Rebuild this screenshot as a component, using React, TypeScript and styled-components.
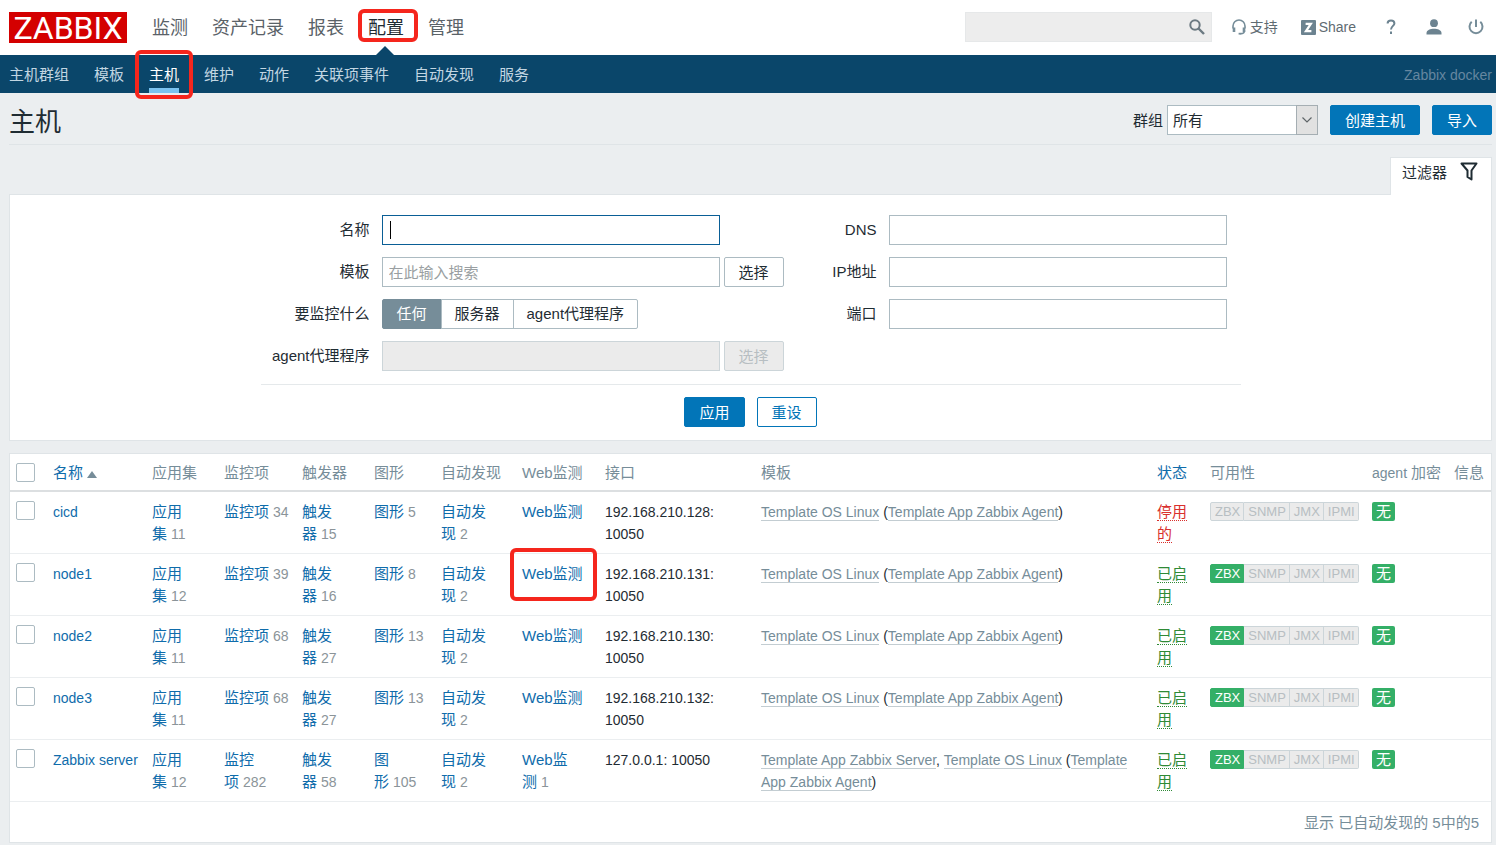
import React from 'react';
import styled, { createGlobalStyle, css } from 'styled-components';

const Global = createGlobalStyle`
  *, *::before, *::after { box-sizing: border-box; }
  body {
    margin: 0;
    background: #ebeef0;
    color: #1f2c33;
    font: 15px/22px "Liberation Sans", "Noto Sans CJK SC", sans-serif;
  }
  button, input, select { font: inherit; color: inherit; margin: 0; }
  a { color: #0f6cab; text-decoration: none; }
  ul { list-style: none; margin: 0; padding: 0; }
`;

/* Red frame drawn over the page to point at an item */
const Callout = styled.span<{ $inset: string }>`
  position: absolute;
  inset: ${p => p.$inset};
  border: 4px solid #f5261d;
  border-radius: 6px;
  pointer-events: none;
  z-index: 2;
`;

const TopBar = styled.header`
  display: flex;
  align-items: center;
  height: 55px;
  padding: 0 9px;
  background: #fff;
`;

const Logo = styled.a`
  display: block;
  width: 118px;
  height: 31px;
  background: #d40000;
  color: #fff;
  font-family: Roboto, "Liberation Sans", sans-serif;
  font-size: 32px;
  line-height: 32px;
  text-align: center;
`;

const MainMenu = styled.ul`
  display: flex;
  gap: 24px;
  margin-left: 25px;
  font-size: 18px;
  line-height: 54px;
`;

const MainItem = styled.li<{ $active?: boolean }>`
  position: relative;
  white-space: nowrap;
  a { color: ${p => (p.$active ? '#1f2c33' : '#5a6268')}; }
  ${p => p.$active && css`
    &::after {
      content: '';
      position: absolute;
      left: 50%;
      bottom: 0;
      margin-left: -10px;
      border: 9px solid transparent;
      border-top: 0;
      border-bottom-color: #0a466a;
    }
  `}
`;

const Tools = styled.div`
  display: flex;
  align-items: center;
  margin-left: auto;
  padding-bottom: 1px;
  font-size: 14px;
  color: #5f6b72;
`;

const SearchBox = styled.form`
  display: flex;
  align-items: center;
  width: 247px;
  height: 30px;
  margin-right: 19px;
  background: #ededed;
  border: 1px solid #e6e8e9;
  input { flex: 1; min-width: 0; height: 28px; padding: 0 8px; border: 0; background: none; outline: 0; }
`;

const IconButton = styled.button`
  display: flex;
  padding: 0 6px 0 0;
  border: 0;
  background: none;
`;

const ToolLink = styled.a<{ $gap: number }>`
  display: flex;
  align-items: center;
  gap: 3px;
  margin-right: ${p => p.$gap}px;
  color: #5f6b72;
  white-space: nowrap;
  svg { display: block; }
`;

const SubBar = styled.nav`
  display: flex;
  align-items: center;
  justify-content: space-between;
  height: 38px;
  padding: 0 4px 0 9px;
  background: #0a466a;
`;

const SubMenu = styled.ul`
  display: flex;
  gap: 25px;
`;

const SubItem = styled.li<{ $active?: boolean }>`
  position: relative;
  height: 38px;
  line-height: 40px;
  white-space: nowrap;
  border-bottom: ${p => (p.$active ? '5px solid #7bc3f0' : '0')};
  a { color: ${p => (p.$active ? '#fff' : '#c2d6e2')}; }
`;

const ServerName = styled.span`
  padding-top: 1px;
  font-size: 14px;
  color: #6587a0;
`;

const Page = styled.main`
  padding: 0 4px 0 9px;
`;

const TitleBar = styled.div`
  display: flex;
  align-items: center;
  height: 52px;
  padding-top: 2px;
  border-bottom: 1px solid #dfe4e7;
  h1 { margin: 0 auto 0 0; padding-top: 4px; font-size: 26px; font-weight: 400; line-height: 40px; }
  label { padding-top: 2px; }
`;

const SelectWrap = styled.span`
  position: relative;
  width: 151px;
  height: 30px;
  margin: 0 12px 0 4px;
  select {
    width: 100%;
    height: 30px;
    padding: 2px 26px 0 5px;
    border: 1px solid #acbbc2;
    border-radius: 0;
    background: #fff;
    appearance: none;
  }
  svg {
    position: absolute;
    top: 0;
    right: 0;
    pointer-events: none;
  }
`;

type Kind = 'primary' | 'outline' | 'plain';
const Button = styled.button<{ $kind: Kind }>`
  flex: none;
  height: 30px;
  padding: 1px 14px 0;
  border: 1px solid #0275b8;
  border-radius: 2px;
  line-height: 28px;
  background: ${p => (p.$kind === 'primary' ? '#0275b8' : '#fff')};
  color: ${p => ({ primary: '#fff', outline: '#0275b8', plain: '#1f2c33' })[p.$kind]};
  ${p => p.$kind === 'plain' && css`border-color: #acbbc2;`}
  &:disabled { background: #ebebeb; border-color: #ccd5d9; color: #b7bec2; }
  & + & { margin-left: 12px; }
`;

const FilterTabs = styled.div`
  display: flex;
  justify-content: flex-end;
  padding-top: 12px;
`;

const FilterTab = styled.button`
  position: relative;
  display: flex;
  align-items: flex-start;
  gap: 13px;
  width: 102px;
  height: 38px;
  margin-bottom: -1px;
  padding: 4px 11px;
  border: 1px solid #dfe4e7;
  border-bottom: 0;
  background: #fff;
  white-space: nowrap;
  svg { flex: none; }
`;

const Panel = styled.section`
  background: #fff;
  border: 1px solid #dfe4e7;
`;

const FilterForm = styled.form`
  max-width: 980px;
  margin: 0 auto;
  padding: 19px 0 13px;
`;

const FilterColumns = styled.div`
  display: flex;
  padding: 1px 0 13px;
  border-bottom: 1px solid #e5e9eb;
`;

const Fields = styled.div<{ $label: number; $field: number }>`
  display: grid;
  grid-template-columns: ${p => p.$label}px ${p => p.$field}px;
  grid-auto-rows: 30px;
  gap: 12px;
  align-content: start;
  align-items: center;
`;

const FieldLabel = styled.label`
  text-align: right;
  white-space: nowrap;
`;

const Field = styled.div`
  position: relative;
  display: flex;
  gap: 4px;
`;

const TextInput = styled.input<{ $focus?: boolean }>`
  flex: none;
  width: 338px;
  height: 30px;
  padding: 0 6px;
  border: 1px solid ${p => (p.$focus ? '#0a5f96' : '#acbbc2')};
  border-radius: 0;
  background: #fff;
  outline: 0;
  &::placeholder { color: #9a9fa2; opacity: 1; }
  &:disabled { background: #ebebeb; border-color: #ccd5d9; }
`;

const Caret = styled.span`
  position: absolute;
  left: 8px;
  top: 6px;
  width: 1px;
  height: 18px;
  background: #000;
`;

const Segments = styled.div`
  display: flex;
`;

const Segment = styled.label`
  min-width: 60px;
  height: 30px;
  padding: 0 13px;
  border: 1px solid #acbbc2;
  line-height: 28px;
  text-align: center;
  white-space: nowrap;
  & + & { margin-left: -1px; }
  &:first-child { border-radius: 2px 0 0 2px; }
  &:last-child { border-radius: 0 2px 2px 0; }
  &:has(input:checked) { background: #768d99; border-color: #768d99; color: #fff; }
  input { position: absolute; opacity: 0; width: 1px; height: 1px; }
`;

const FormButtons = styled.div`
  display: flex;
  justify-content: center;
  padding-top: 12px;
`;

const TablePanel = styled(Panel)`
  margin: 12px 0 2px;
`;

const HostTable = styled.table`
  width: 100%;
  table-layout: fixed;
  border-collapse: separate;
  border-spacing: 0;
  th {
    height: 38px;
    padding: 1px 6px 0;
    border-bottom: 2px solid #dcdfe1;
    font-weight: 400;
    text-align: left;
    white-space: nowrap;
    color: #768d99;
  }
  td {
    padding: 9px 6px 8px;
    border-bottom: 1px solid #ebeef0;
    vertical-align: top;
  }
  tfoot td {
    padding: 10px 12px 8px;
    border: 0;
    text-align: right;
    color: #768d99;
  }
`;

const CheckBox = styled.input`
  display: block;
  appearance: none;
  width: 19px;
  height: 19px;
  border: 1px solid #acbbc2;
  border-radius: 2px;
  background: #fff;
  &:checked { background: #0275b8; }
`;

const SortArrow = styled.span`
  display: inline-block;
  margin-left: 4px;
  border: 5px solid transparent;
  border-top: 0;
  border-bottom: 7px solid #768d99;
`;

const Latin = styled.span`
  font-size: 14px;
`;

const Count = styled.span`
  font-size: 14px;
  color: #8b9499;
`;

const Marked = styled.span`
  position: relative;
  display: inline-block;
`;

const TemplateLink = styled.a`
  color: #768d99;
  border-bottom: 1px solid #c3cdd2;
`;

const Status = styled.a<{ $on: boolean }>`
  color: ${p => (p.$on ? '#2f8a36' : '#d9302d')};
  border-bottom: 1px dotted currentColor;
`;

const Badges = styled.div`
  display: flex;
  margin-top: 1px;
`;

const Badge = styled.span<{ $on?: boolean }>`
  height: 19px;
  padding: 0 3px;
  border: 1px solid ${p => (p.$on ? '#34af67' : '#ccd5d9')};
  background: ${p => (p.$on ? '#34af67' : '#ebebeb')};
  color: ${p => (p.$on ? '#fff' : '#b7bec2')};
  font-size: 13px;
  line-height: 18px;
  & + & { border-left-width: 0; padding-left: 4px; }
  &:first-child { border-radius: 2px 0 0 2px; padding-left: 4px; }
  &:last-child { border-radius: 0 2px 2px 0; }
`;

const Encryption = styled.span`
  display: block;
  width: 23px;
  height: 19px;
  margin-top: 1px;
  border-radius: 2px;
  background: #34af67;
  color: #fff;
  line-height: 20px;
  text-align: center;
`;

const SearchIcon = () => (
  <svg width="16" height="16" viewBox="0 0 16 16" fill="none" stroke="#6c7a82">
    <circle cx="6" cy="6" r="4.7" strokeWidth="2" />
    <path d="M9.5 9.5 15 15" strokeWidth="2.4" />
  </svg>
);
const HeadsetIcon = () => (
  <svg width="16" height="16" viewBox="0 0 16 16" fill="none" stroke="#768d99">
    <path d="M2 9.5V7a6 6 0 0 1 12 0v2.5M13.5 11.5c0 2-1.4 3.3-4 3.3" strokeWidth="1.6" />
    <path d="M3 8.5v4.5M13 8.5v4.5" strokeWidth="2.6" />
    <path d="M7.6 14.7h2.6" strokeWidth="1.8" />
  </svg>
);
const ShareIcon = () => (
  <svg width="15" height="15" viewBox="0 0 15 15">
    <rect width="15" height="15" rx="1" fill="#6c8390" />
    <path d="M4.600 3.800h5.200L5 11.200h5.400" fill="none" stroke="#fff" strokeWidth="2.3" />
  </svg>
);
const HelpIcon = () => (
  <svg width="10" height="16" viewBox="0 0 10 16" fill="none" stroke="#6c8390" strokeWidth="2">
    <path d="M1.6 4.6C1.6 2.6 3 1.5 5 1.5s3.4 1.2 3.4 2.9C8.4 6.900 5 7 5 10.6" />
    <path d="M5 12.6v2.4" />
  </svg>
);
const UserIcon = () => (
  <svg width="16" height="16" viewBox="0 0 16 16" fill="#6c8390">
    <circle cx="8" cy="4.2" r="3.9" />
    <path d="M.5 15.500v-1.500C.5 11.200 4.500 9.800 8 9.800s7.500 1.400 7.500 4.200v1.500z" />
  </svg>
);
const PowerIcon = () => (
  <svg width="16" height="16" viewBox="0 0 16 16" fill="none" stroke="#768d99" strokeWidth="2">
    <path d="M3.700 2.800a6.500 6.500 0 1 0 8.600 0M8 .5v7.500" />
  </svg>
);
const FunnelIcon = () => (
  <svg width="18" height="19" viewBox="0 0 18 19" fill="none" stroke="#1f2c33" strokeWidth="2">
    <path d="M1.5 1.5h15L11.5 8.500v9l-4-2.500V8.500z" strokeLinejoin="round" />
  </svg>
);
const ChevronBox = () => (
  <svg width="22" height="30" viewBox="0 0 22 30" fill="none">
    <rect x=".5" y=".5" width="21" height="29" fill="#e1e1e1" stroke="#a5aeb3" />
    <path d="m6.5 12.5 4.5 4.5 4.5-4.5" stroke="#5f6568" strokeWidth="1.2" />
  </svg>
);

const mainMenu = ['监测', '资产记录', '报表', '配置', '管理'];
const subMenu = ['主机群组', '模板', '主机', '维护', '动作', '关联项事件', '自动发现', '服务'];

const columnWidths = [37, 99, 72, 78, 72, 67, 81, 83, 156, 0, 53, 162, 82, 43];

interface Host {
  name: string;
  apps: number;
  items: number;
  triggers: number;
  graphs: number;
  web?: number;
  address: string;
  enabled: boolean;
  marked?: boolean;
}

const hosts: Host[] = [
  { name: 'cicd', apps: 11, items: 34, triggers: 15, graphs: 5, address: '192.168.210.128', enabled: false },
  { name: 'node1', apps: 12, items: 39, triggers: 16, graphs: 8, address: '192.168.210.131', enabled: true, marked: true },
  { name: 'node2', apps: 11, items: 68, triggers: 27, graphs: 13, address: '192.168.210.130', enabled: true },
  { name: 'node3', apps: 11, items: 68, triggers: 27, graphs: 13, address: '192.168.210.132', enabled: true },
  { name: 'Zabbix server', apps: 12, items: 282, triggers: 58, graphs: 105, web: 1, address: '127.0.0.1', enabled: true },
];

const Counted = ({ label, count }: { label: string; count?: number }) => (
  <>
    <a href="#">{label}</a>
    {count !== undefined && <Count>{'\u00a0'}{count}</Count>}
  </>
);

const HostRow = ({ host }: { host: Host }) => (
  <tr>
    <td><CheckBox type="checkbox" aria-label={host.name} /></td>
    <td><Latin><a href="#">{host.name}</a></Latin></td>
    <td><Counted label="应用集" count={host.apps} /></td>
    <td><Counted label="监控项" count={host.items} /></td>
    <td><Counted label="触发器" count={host.triggers} /></td>
    <td><Counted label="图形" count={host.graphs} /></td>
    <td><Counted label="自动发现" count={2} /></td>
    <td>
      {host.marked
        ? <Marked><Counted label="Web监测" /><Callout $inset="-15px -14px -16px -12px" /></Marked>
        : <Counted label="Web监测" count={host.web} />}
    </td>
    <td><Latin>{host.address}: 10050</Latin></td>
    <td>
      <Latin>
        {host.web && <><TemplateLink href="#">Template App Zabbix Server</TemplateLink>, </>}
        <TemplateLink href="#">Template OS Linux</TemplateLink>{' ('}
        <TemplateLink href="#">Template App Zabbix Agent</TemplateLink>)
      </Latin>
    </td>
    <td><Status href="#" $on={host.enabled}>{host.enabled ? '已启用' : '停用的'}</Status></td>
    <td>
      <Badges>
        <Badge $on={host.enabled}>ZBX</Badge>
        <Badge>SNMP</Badge>
        <Badge>JMX</Badge>
        <Badge>IPMI</Badge>
      </Badges>
    </td>
    <td><Encryption>无</Encryption></td>
    <td />
  </tr>
);

export default function App() {
  return (
    <>
      <Global />
      <TopBar>
        <Logo href="#">ZABBIX</Logo>
        <MainMenu>
          {mainMenu.map(label => (
            <MainItem key={label} $active={label === '配置'}>
              <a href="#">{label}</a>
              {label === '配置' && <Callout $inset="8px -14px 13px -10px" />}
            </MainItem>
          ))}
        </MainMenu>
        <Tools>
          <SearchBox onSubmit={e => e.preventDefault()}>
            <input type="text" aria-label="搜索" />
            <IconButton aria-label="搜索"><SearchIcon /></IconButton>
          </SearchBox>
          <ToolLink href="#" $gap={23}><HeadsetIcon />支持</ToolLink>
          <ToolLink href="#" $gap={30}><ShareIcon />Share</ToolLink>
          <ToolLink href="#" $gap={30} aria-label="帮助"><HelpIcon /></ToolLink>
          <ToolLink href="#" $gap={26} aria-label="用户"><UserIcon /></ToolLink>
          <ToolLink href="#" $gap={3} aria-label="退出"><PowerIcon /></ToolLink>
        </Tools>
      </TopBar>
      <SubBar>
        <SubMenu>
          {subMenu.map(label => (
            <SubItem key={label} $active={label === '主机'}>
              <a href="#">{label}</a>
              {label === '主机' && <Callout $inset="-5px -14px -11px -14px" />}
            </SubItem>
          ))}
        </SubMenu>
        <ServerName>Zabbix docker</ServerName>
      </SubBar>
      <Page>
        <TitleBar>
          <h1>主机</h1>
          <label htmlFor="group">群组</label>
          <SelectWrap>
            <select id="group"><option>所有</option></select>
            <ChevronBox />
          </SelectWrap>
          <Button $kind="primary">创建主机</Button>
          <Button $kind="primary">导入</Button>
        </TitleBar>
        <FilterTabs>
          <FilterTab>过滤器<FunnelIcon /></FilterTab>
        </FilterTabs>
        <Panel>
          <FilterForm onSubmit={e => e.preventDefault()}>
            <FilterColumns>
              <Fields $label={109} $field={402}>
                <FieldLabel htmlFor="name">名称</FieldLabel>
                <Field><TextInput id="name" $focus /><Caret /></Field>
                <FieldLabel htmlFor="tpl">模板</FieldLabel>
                <Field>
                  <TextInput id="tpl" placeholder="在此输入搜索" />
                  <Button type="button" $kind="plain">选择</Button>
                </Field>
                <FieldLabel as="span" id="monitored">要监控什么</FieldLabel>
                <Segments role="radiogroup" aria-labelledby="monitored">
                  <Segment><input type="radio" name="by" defaultChecked />任何</Segment>
                  <Segment><input type="radio" name="by" />服务器</Segment>
                  <Segment><input type="radio" name="by" />agent代理程序</Segment>
                </Segments>
                <FieldLabel htmlFor="proxy">agent代理程序</FieldLabel>
                <Field>
                  <TextInput id="proxy" disabled />
                  <Button type="button" $kind="plain" disabled>选择</Button>
                </Field>
              </Fields>
              <Fields $label={93} $field={338}>
                <FieldLabel htmlFor="dns">DNS</FieldLabel>
                <TextInput id="dns" />
                <FieldLabel htmlFor="ip">IP地址</FieldLabel>
                <TextInput id="ip" />
                <FieldLabel htmlFor="port">端口</FieldLabel>
                <TextInput id="port" />
              </Fields>
            </FilterColumns>
            <FormButtons>
              <Button $kind="primary">应用</Button>
              <Button type="reset" $kind="outline">重设</Button>
            </FormButtons>
          </FilterForm>
        </Panel>
        <TablePanel>
          <HostTable>
            <colgroup>
              {columnWidths.map((w, i) => <col key={i} width={w || undefined} />)}
            </colgroup>
            <thead>
              <tr>
                <th><CheckBox type="checkbox" aria-label="全选" /></th>
                <th><a href="#">名称<SortArrow /></a></th>
                <th>应用集</th>
                <th>监控项</th>
                <th>触发器</th>
                <th>图形</th>
                <th>自动发现</th>
                <th>Web监测</th>
                <th>接口</th>
                <th>模板</th>
                <th><a href="#">状态</a></th>
                <th>可用性</th>
                <th><Latin>agent </Latin>加密</th>
                <th>信息</th>
              </tr>
            </thead>
            <tbody>
              {hosts.map(host => <HostRow key={host.name} host={host} />)}
            </tbody>
            <tfoot>
              <tr><td colSpan={14}>显示 已自动发现的 5中的5</td></tr>
            </tfoot>
          </HostTable>
        </TablePanel>
      </Page>
    </>
  );
}
